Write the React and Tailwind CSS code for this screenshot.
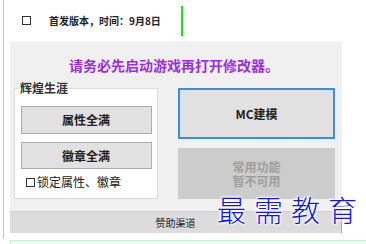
import React from 'react';

const cjk = { fontFamily: '"Noto Sans CJK SC", "Liberation Sans", sans-serif' };

const App = () => {
  return (
    <div className="relative w-[366px] h-[244px] bg-white overflow-hidden" style={cjk}>
      {/* left edge line */}
      <div className="absolute left-[3px] top-0 h-[239px] w-px bg-[#c8c8c8]" />

      <div className="ml-[10px] w-[332px] flex flex-col">
        {/* top row */}
        <div className="h-[41px] flex items-center">
          <div className="ml-[12px] w-[9px] h-[9px] border border-[#333]" />
          <span className="ml-[18px] text-[10px] font-bold text-[#222] leading-none">首发版本，时间：9月8日</span>
          <div className="ml-[20px] w-[2px] h-[30px] bg-[#22dd22]" />
        </div>

        {/* main panel */}
        <div className="h-[170px] bg-[#f0f0f0] border-t border-[#f8f8f8] flex flex-col">
          <div className="h-[46px] flex items-center justify-center pr-[4px]">
            <span className="text-[14px] font-bold text-[#9a2fe0] leading-none">请务必先启动游戏再打开修改器。</span>
          </div>

          <div className="flex pl-[4px] gap-[20px]">
            {/* group box */}
            <div className="relative w-[144px] h-[111px] bg-white border border-[#dcdcdc] flex flex-col items-center">
              <span className="absolute left-[4px] -top-[7px] bg-white px-[1px] text-[12px] font-bold text-[#333] leading-none">辉煌生涯</span>
              <button className="mt-[17px] w-[131px] h-[28px] bg-[#e1e1e1] border border-[#adadad] text-[12px] font-bold text-[#222]">属性全满</button>
              <button className="mt-[8px] w-[131px] h-[27px] bg-[#e1e1e1] border border-[#adadad] text-[12px] font-bold text-[#222]">徽章全满</button>
              <div className="self-start ml-[11px] mt-[7px] flex items-center gap-[2px]">
                <div className="w-[9px] h-[9px] border border-[#333] bg-white" />
                <span className="text-[12px] text-[#222] leading-none">锁定属性、徽章</span>
              </div>
            </div>

            {/* right column */}
            <div className="flex flex-col gap-[9px]">
              <button className="w-[157px] h-[51px] bg-[#e1e1e1] border-2 border-[#3c8fd6] text-[12px] font-bold text-[#222]">MC建模</button>
              <div className="w-[157px] h-[51px] bg-[#cccccc] flex items-center justify-center text-center text-[12px] font-bold text-[#9e9e9e] leading-[14px]">
                常用功能<br />暂不可用
              </div>
            </div>
          </div>
        </div>

        {/* bottom bar */}
        <div className="h-[22px] bg-[#dcdcdc] border-t border-[#cfcfcf] border-r border-r-[#aaaaaa] flex items-center justify-center">
          <span className="text-[10px] text-[#222]">赞助渠道</span>
        </div>
      </div>

      {/* green area at bottom */}
      <div className="absolute left-[10px] right-0 top-[240px] h-[4px] bg-[#ecfff2] border-t border-l border-[#c6f0d4]" />

      {/* watermark */}
      <div
        className="absolute left-[217px] top-[195px] text-[29px] font-light text-[#1414e6] leading-none tracking-[8px]"
        style={{ textShadow: '0 0 2px #fff, 0 0 3px #fff, 1px 1px 2px #fff, -1px -1px 2px #fff' }}
      >
        最需教育
      </div>
    </div>
  );
};

export default App;
